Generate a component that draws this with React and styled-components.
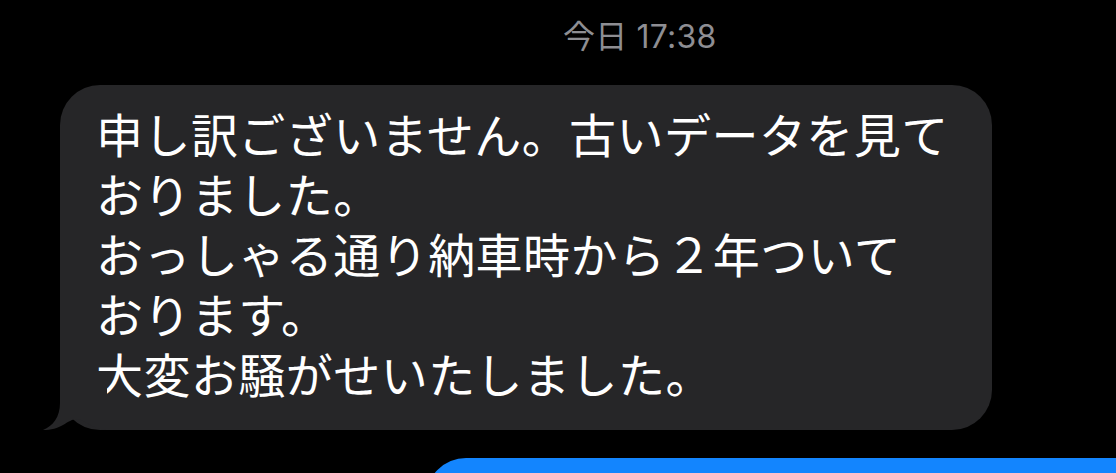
import React from 'react';
import styled, { createGlobalStyle } from 'styled-components';

const GlobalStyle = createGlobalStyle`
  html, body {
    margin: 0;
    padding: 0;
    background: #000;
    overflow: hidden;
  }
  body {
    width: 1116px;
    height: 473px;
  }
`;

const Screen = styled.div`
  display: flex;
  flex-direction: column;
  width: 1116px;
  height: 473px;
  overflow: hidden;
  background: #000;
`;

const Stamp = styled.div`
  padding: 17px 0 0 563px;
  height: 40px;
  font-family: 'Inter', 'Noto Sans CJK JP', sans-serif;
  font-size: 32px;
  line-height: 40px;
  letter-spacing: 0.2px;
  color: #8e8e93;
  white-space: nowrap;
`;

const Row = styled.div`
  display: flex;
  padding-left: ${(p) => p.$offset}px;
  margin-top: 28px;
`;

const Bubble = styled.div`
  position: relative;
  box-sizing: border-box;
  width: 932px;
  padding: 18px 36px 27px;
  border-radius: 40px;
  background: #262628;
  color: #fff;
  font-family: 'Noto Sans CJK JP', sans-serif;
  font-size: 47px;
  line-height: 60px;
  letter-spacing: 0.45px;
  white-space: nowrap;
`;

const Line = styled.div`
  height: 60px;
`;

const Tail = styled.svg`
  position: absolute;
  left: -20px;
  bottom: 0;
  width: 80px;
  height: 50px;
`;

const BlueBubble = styled.div`
  flex: none;
  width: 760px;
  height: 110px;
  border-radius: 40px;
  background: #1385fe;
`;

const lines = [
  '申し訳ございません。古いデータを見て',
  'おりました。',
  'おっしゃる通り納車時から２年ついて',
  'おります。',
  '大変お騒がせいたしました。',
];

export default function App() {
  return (
    <Screen>
      <GlobalStyle />
      <Stamp>今日 17:38</Stamp>
      <Row $offset={60}>
        <Bubble>
          {lines.map((l, i) => (
            <Line key={i}>{l}</Line>
          ))}
          <Tail viewBox="0 0 80 50">
            <path
              d="M20 0 L20 23 C20 37 13 46 3 50 C11 50 18 48 23 45 C28 42 32 39 38 39 C48 42 55 50 67 50 L67 0 Z"
              fill="#262628"
            />
          </Tail>
        </Bubble>
      </Row>
      <Row $offset={426}>
        <BlueBubble />
      </Row>
    </Screen>
  );
}
